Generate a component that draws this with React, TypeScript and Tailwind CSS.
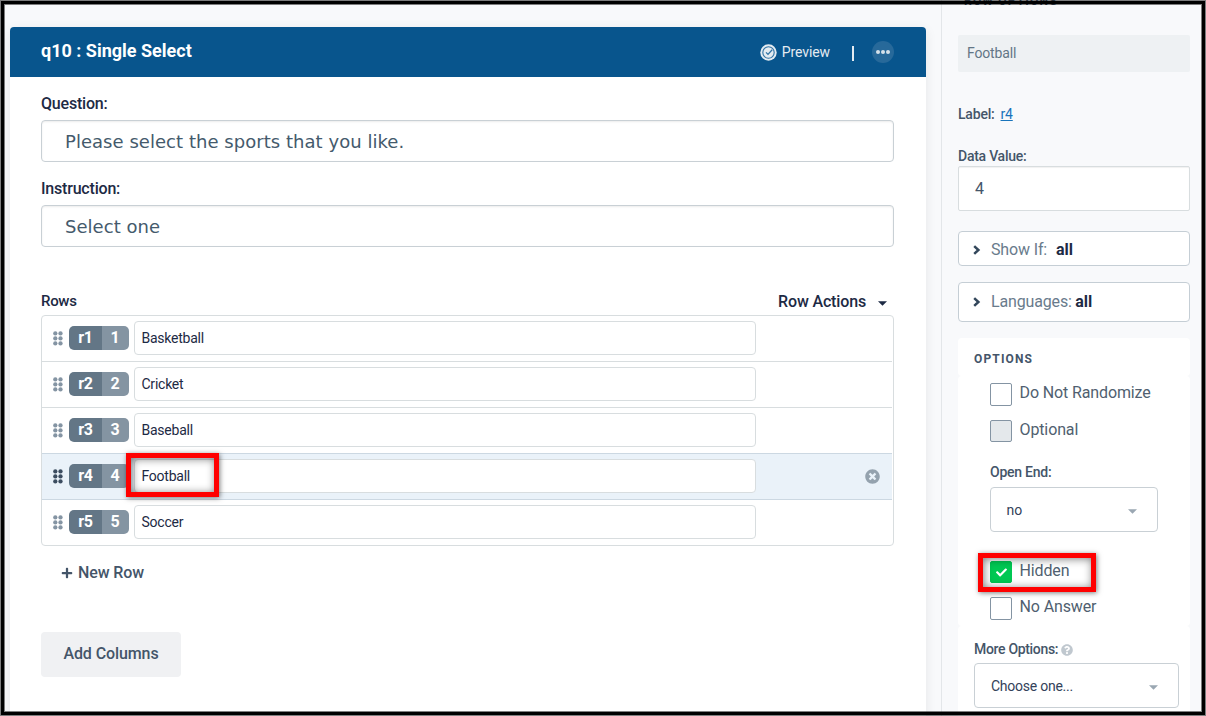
import React from "react";
import { FaCheck, FaPlus, FaQuestionCircle, FaTimesCircle } from "react-icons/fa";

const rows = [
  { id: 1, label: "Basketball" },
  { id: 2, label: "Cricket" },
  { id: 3, label: "Baseball" },
  { id: 4, label: "Football", active: true },
  { id: 5, label: "Soccer" },
];

function Caret({ className }: { className: string }) {
  return (
    <svg viewBox="0 0 10 5" className={className} fill="currentColor">
      <path d="M0 0h10L5 5z" />
    </svg>
  );
}

function Grip({ active }: { active?: boolean }) {
  return (
    <svg width="10" height="15" viewBox="0 0 10 15" className={active ? "text-[#3c4d60]" : "text-[#8494a3]"} fill="currentColor">
      {[2.4, 7.4, 12.4].map((y) => (
        <g key={y}>
          <circle cx="2.3" cy={y} r="2.15" />
          <circle cx="7.5" cy={y} r="2.15" />
        </g>
      ))}
    </svg>
  );
}

function PreviewIcon() {
  return (
    <svg width="17" height="17" viewBox="0 0 17 17" fill="none">
      <circle cx="8.5" cy="8.5" r="8.2" fill="#e4ebf1" />
      <circle cx="8.5" cy="8.5" r="5.7" stroke="#2f72a3" strokeWidth="1.1" />
      <path d="M6 8.4l2 2 4.2-4.6" stroke="#2f72a3" strokeWidth="1.3" />
    </svg>
  );
}

function Field({ label, value }: { label: string; value: string }) {
  return (
    <div>
      <div className="h-[17px] pt-px text-[16px] leading-[17px] font-medium tracking-[-0.2px] text-[#1d2a44]">{label}</div>
      <div className="mt-[9px] flex h-[42px] items-center rounded border border-[#c9d0d5] bg-white pl-[23px] font-['DejaVu_Sans',sans-serif] text-[18px] tracking-[0.04px] text-[#445a6c] shadow-[inset_0_1px_2px_rgba(0,0,0,0.08)]">
        {value}
      </div>
    </div>
  );
}

function Row({ id, label, active }: { id: number; label: string; active?: boolean }) {
  const last = id === rows.length;
  return (
    <div
      className={`mr-px flex items-start pt-[5px] pl-[11px] ${last ? "h-[45px]" : "h-[46px] border-b"} ${
        active ? "border-[#ccd8e2] bg-[#eaf2f9]" : id === 3 ? "border-[#ccd8e2]" : "border-[#d8dddf]"
      }`}
    >
      <div className="mt-[10px]">
        <Grip active={active} />
      </div>
      <div className="mt-[5px] ml-[6px] flex h-6 w-[60px] overflow-hidden rounded-[5px] text-[16px] leading-6 font-bold text-white">
        <span className="w-[33px] bg-[#637686] text-center tracking-[-0.2px]">r{id}</span>
        <span className="w-[27px] bg-[#8494a2] pr-px text-center">{id}</span>
      </div>
      <div className="ml-[5px] flex h-[34px] w-[622px] items-center rounded border border-[#d8dddf] bg-white pt-[1px] pl-[6.5px] text-[14px] tracking-[-0.24px] text-[#1d2a44]">
        {label}
      </div>
      {active && <FaTimesCircle className="mt-[10px] ml-[109px] size-[15px] text-[#94a2ae]" />}
    </div>
  );
}

function CheckRow({ label, state }: { label: string; state?: "checked" | "disabled" }) {
  return (
    <div className="flex h-[23px] items-start">
      <span
        className={`flex w-[22px] items-center justify-center rounded-[2px] border ${
          state === "checked"
            ? "h-[22px] border-[#00c853] bg-[#00c853]"
            : state === "disabled"
              ? "h-[22px] border-[#8494a3] bg-[#e4e8eb]"
              : "h-[23px] border-[#8494a3] bg-white"
        }`}
      >
        {state === "checked" && <FaCheck className="size-[11px] text-white" />}
      </span>
      <span className="ml-[7.5px] text-[16px] leading-[19px] tracking-[-0.12px] text-[#505f70]">{label}</span>
    </div>
  );
}

function Disclosure({ label, className, gap }: { label: string; className: string; gap: string }) {
  return (
    <div className={`flex items-center rounded border border-[#c5ced5] bg-white pl-[14px] text-[16px] ${className}`}>
      <svg width="8" height="10" viewBox="0 0 8 10" fill="none" stroke="#33475b" strokeWidth="2.5">
        <path d="M1.2 1.1L5.4 5L1.2 8.9" />
      </svg>
      <span className="ml-[10px] tracking-[-0.15px] text-[#697b8c]">{label}</span>
      <span className={`font-bold tracking-[-0.1px] text-[#1d2a44] ${gap}`}>all</span>
    </div>
  );
}

export default function App() {
  return (
    <div className="relative flex h-[716px] w-[1206px] overflow-hidden bg-[#f8f9fb] font-[Roboto,sans-serif]">
      <main className="h-full w-[941px] shrink-0 pt-[27px] pl-[10px]">
        <section className="h-[720px] w-[916px] rounded-t-[4px] bg-white shadow-[0_3px_12px_rgba(0,0,0,0.08)]">
          <header className="flex h-[50px] items-center rounded-t-[4px] bg-[#08558d] pr-[32px] pl-[31px] text-white">
            <h1 className="mb-[4px] text-[18px] font-bold">q10 : Single Select</h1>
            <div className="ml-auto flex items-center text-[14px] text-[#e4ebf1]">
              <PreviewIcon />
              <span className="ml-[5px] tracking-[-0.1px]">Preview</span>
              <span className="mt-[3px] ml-[22px] h-[15px] w-[2px] bg-[#e4ebf1]" />
              <span className="ml-[18px] flex size-[22px] items-center justify-center gap-[1.5px] rounded-full bg-[#27699a]">
                <i className="size-[3.5px] rounded-full bg-[#d5e1ea]" />
                <i className="size-[3.5px] rounded-full bg-[#d5e1ea]" />
                <i className="size-[3.5px] rounded-full bg-[#d5e1ea]" />
              </span>
            </div>
          </header>
          <div className="pt-[17px] pr-[32px] pl-[31px]">
            <Field label="Question:" value="Please select the sports that you like." />
            <div className="h-[17px]" />
            <Field label="Instruction:" value="Select one" />
            <div className="mt-[45px] flex h-[18px] items-center justify-between leading-[18px] font-medium text-[#1d2a44]">
              <span className="text-[15px] tracking-[-0.3px]">Rows</span>
              <span className="flex items-center pt-[2px] text-[16px] tracking-[-0.15px]">
                Row Actions
                <Caret className="mt-[2px] mr-[7px] ml-3 h-[5px] w-[9px]" />
              </span>
            </div>
            <div className="mt-[5px] rounded border border-[#d8dddf]">
              {rows.map((row) => (
                <Row key={row.id} {...row} />
              ))}
            </div>
            <div className="mt-[17px] flex h-5 items-center pl-[20px] text-[16px] font-medium tracking-[-0.12px] text-[#445569]">
              <FaPlus className="size-[12px]" />
              <span className="ml-[5px]">New Row</span>
            </div>
            <button className="mt-[49px] h-[45px] w-[140px] rounded bg-[#f0f1f3] pb-[2px] text-[16px] font-medium tracking-[-0.1px] text-[#445569]">
              Add Columns
            </button>
          </div>
        </section>
      </main>

      <aside className="h-full w-[265px] shrink-0 border-l border-[#e3e6e9] pr-4 pl-4 text-[#445569]">
        <div className="h-[35px]">
          <div className="-mt-[9px] h-5 pl-[6px] text-[12px] leading-5 font-bold tracking-[1.2px]">ROW OPTIONS</div>
        </div>
        <div className="-mt-[11px]" />
        <div className="mt-[20px] flex h-[37px] w-[232px] items-center rounded-[2px] bg-[#eef1f3] pl-[9px] text-[14px] tracking-[-0.15px] text-[#637686]">
          Football
        </div>
        <div className="mt-[34px] flex h-4 gap-[6px] text-[14px] leading-4 tracking-[-0.2px]">
          <span className="font-medium">Label:</span>
          <a className="text-[#1874bb] underline">r4</a>
        </div>
        <div className="mt-[26px] h-4 text-[14px] leading-4 font-medium tracking-[-0.25px]">Data Value:</div>
        <div className="mt-[2px] flex h-[45px] w-[232px] items-center rounded-[2px] border border-[#d8dddf] bg-white pl-4 text-[16px] shadow-[inset_0_1px_1px_rgba(0,0,0,0.06)]">
          4
        </div>
        <Disclosure label="Show If:" className="mt-5 h-[35px] w-[232px] pt-[2px]" gap="ml-[9px]" />
        <Disclosure label="Languages:" className="mt-4 h-[40px] w-[232px] pb-px" gap="ml-[3.5px]" />

        <div className="mt-4 flex h-[38px] w-[232px] items-center rounded-[4px] bg-white pt-[4px] pl-4 text-[12px] font-bold tracking-[1.15px]">
          OPTIONS
        </div>
        <div className="h-[250px] w-[232px] rounded-[4px] bg-white pt-[7px] pl-8">
          <CheckRow label="Do Not Randomize" />
          <div className="h-[14px]" />
          <CheckRow label="Optional" state="disabled" />
          <div className="mt-[21px] h-4 text-[14px] leading-4 font-medium tracking-[-0.25px]">Open End:</div>
          <div className="mt-[7px] flex h-[45px] w-[168px] items-center justify-between rounded border border-[#c9d0d5] pt-px pr-5 pl-[15.5px] text-[14px] text-[#33425a]">
            no
            <Caret className="mt-[2px] h-[5px] w-[9px] text-[#9aa7b2]" />
          </div>
          <div className="h-[29px]" />
          <CheckRow label="Hidden" state="checked" />
          <div className="h-[13px]" />
          <CheckRow label="No Answer" />
        </div>
        <div className="h-[100px] w-[232px] rounded-[4px] bg-white pt-[15px] pl-4">
          <div className="flex h-4 items-center gap-[3px] text-[14px] leading-4 font-medium tracking-[-0.32px]">
            More Options:
            <FaQuestionCircle className="mt-[2px] size-[12px] text-[#c0c8cf]" />
          </div>
          <div className="mt-[6px] flex h-[45px] w-[205px] items-center justify-between rounded border border-[#c9d0d5] pt-[2px] pr-5 pl-4 text-[14px] tracking-[-0.25px] text-[#33425a]">
            Choose one...
            <Caret className="mt-px h-[5px] w-[9px] text-[#9aa7b2]" />
          </div>
        </div>
      </aside>

      <div className="absolute top-[453px] left-[126px] h-[44px] w-[93px] border-[5px] border-[#ff0000] shadow-[1px_1px_5px_rgba(0,0,0,0.5),inset_1px_1px_9px_rgba(0,0,0,0.5)]" />
      <div className="absolute top-[553px] left-[978px] h-[39px] w-[118px] border-[5px] border-[#ff0000] shadow-[1px_1px_5px_rgba(0,0,0,0.5),inset_1px_1px_9px_rgba(0,0,0,0.5)]" />
      <div className="pointer-events-none absolute inset-0 border border-black/50">
        <div className="h-full border-[3px] border-black">
          <div className="h-full border border-black/50" />
        </div>
      </div>
    </div>
  );
}
